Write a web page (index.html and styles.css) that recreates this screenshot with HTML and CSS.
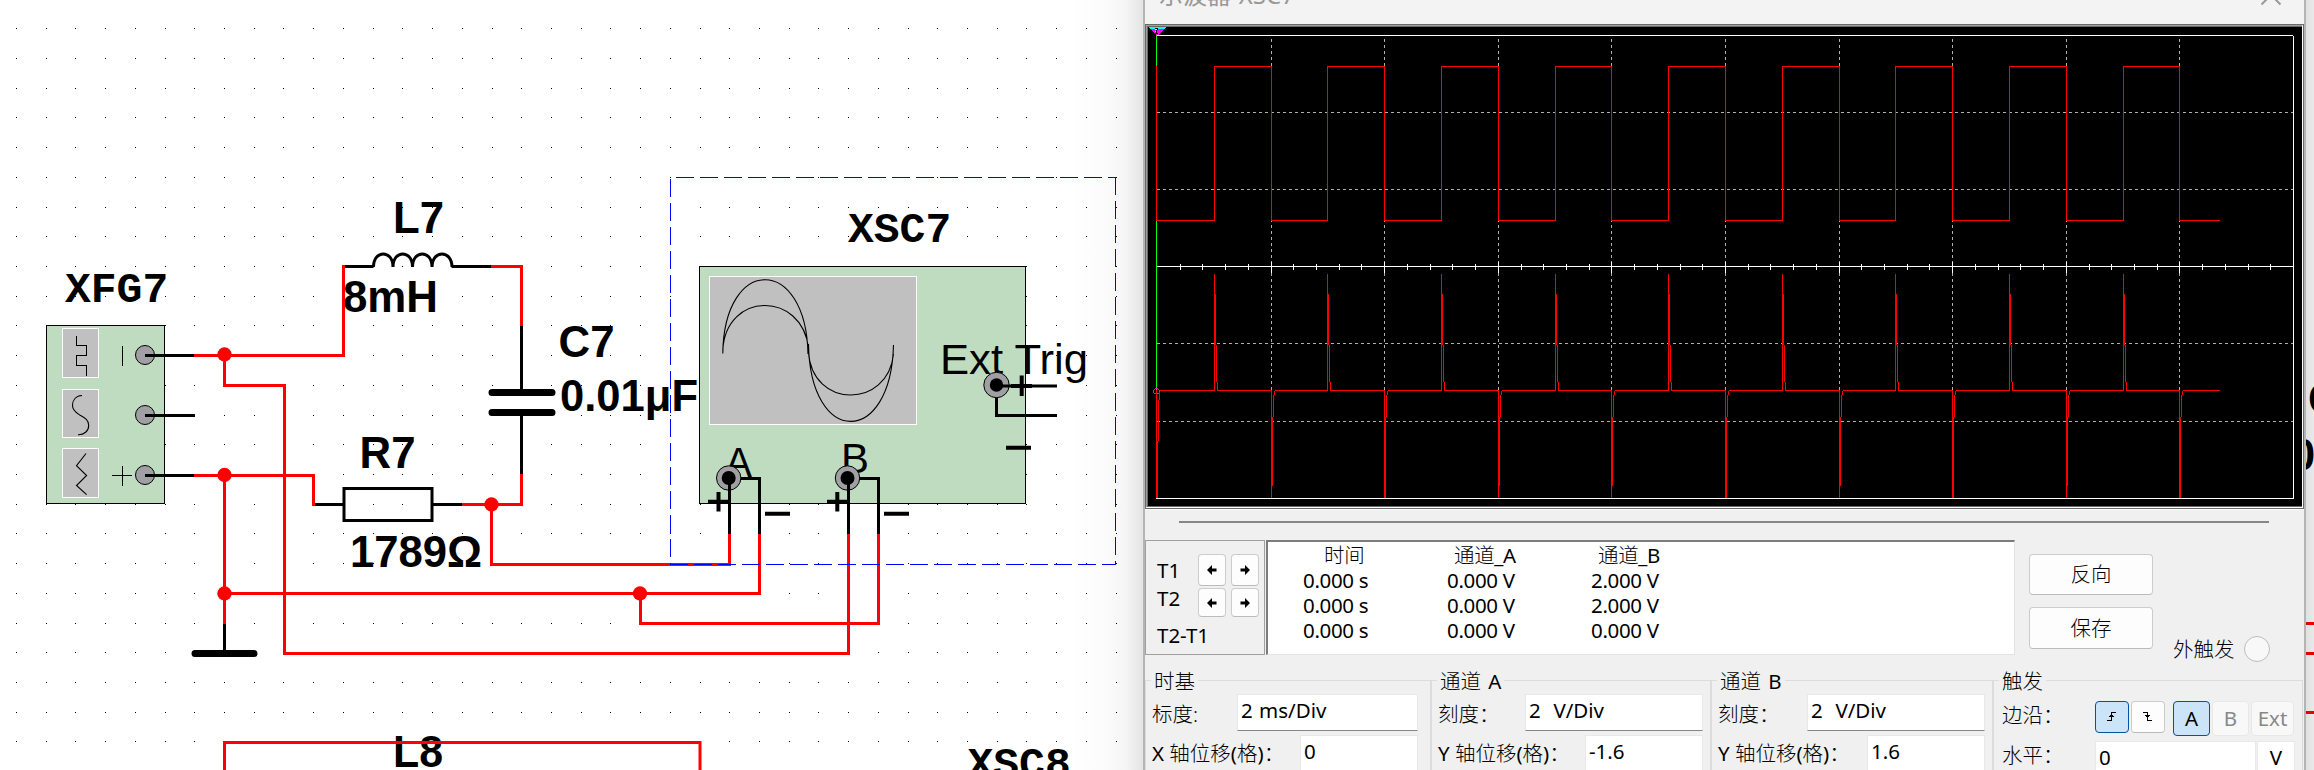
FILE: index.html
```html
<!DOCTYPE html>
<html lang="zh-CN">
<head>
<meta charset="utf-8">
<title>示波器-XSC7</title>
<link rel="stylesheet" href="styles.css">
</head>
<body>
<svg class="schematic" width="2314" height="770" viewBox="0 0 2314 770">
  <g id="grid" shape-rendering="crispEdges"></g>
  <!-- function generator -->
  <g shape-rendering="crispEdges">
    <rect class="device" x="46.500" y="325.500" width="118" height="178"/>
    <rect class="screen" x="62.500" y="328.500" width="36" height="49"/>
    <rect class="screen" x="62.500" y="389.500" width="36" height="48"/>
    <rect class="screen" x="62.500" y="448.500" width="36" height="49"/>
    <path class="thin" d="M76.500 336V345.500H86.500V355.500H76.500V365.500H86.500V376M122.500 346V366M122.500 466V486M112 475.500H132"/>
  </g>
  <path class="thin" d="M82 395.500C75 396 72.500 401 72.500 405.500C72.500 411 77 413 80.500 415.500C85 418 88.700 420 88.700 425.500C88.700 431 84 435 78 434.700M86 453.500L76.500 465.700L86.600 475.500L76.500 485.500L86.600 494.700"/>
  <g class="pin"><circle cx="145" cy="355" r="9.500"/><circle cx="145" cy="415" r="9.500"/><circle cx="145" cy="475" r="9.500"/></g>
  <!-- oscilloscope -->
  <g shape-rendering="crispEdges">
    <rect class="device" x="699.500" y="266.500" width="326" height="237"/>
    <rect class="screen" x="709.500" y="276.500" width="207" height="148"/>
  </g>
  <path class="thin" d="M722.800 353.500C724 255 806 255 808 354M722.800 350C726 291 802 291 808.500 348M808.500 344C810 447 891 447 893.500 345M808.500 352C812 409 888 409 893.500 354"/>

  <g class="label">
    <text x="393" y="232.500" textLength="51" lengthAdjust="spacingAndGlyphs">L7</text>
    <text x="343" y="311.500" textLength="95" lengthAdjust="spacingAndGlyphs">8mH</text>
    <text x="359.500" y="467.500" textLength="56" lengthAdjust="spacingAndGlyphs">R7</text>
    <text x="558.500" y="357" textLength="56" lengthAdjust="spacingAndGlyphs">C7</text>
    <text x="560" y="411" textLength="138" lengthAdjust="spacingAndGlyphs">0.01μF</text>
    <text x="350" y="566.500" textLength="132" lengthAdjust="spacingAndGlyphs">1789Ω</text>
    <text x="393" y="767" textLength="50" lengthAdjust="spacingAndGlyphs">L8</text>
  </g>
  <g class="name">
    <text x="65" y="301.500">XFG7</text>
    <text x="848" y="242">XSC7</text>
    <text x="967.500" y="776.500">XSC8</text>
  </g>
  <g class="port">
    <text x="940" y="373.500" textLength="148" lengthAdjust="spacingAndGlyphs">Ext Trig</text>
    <text x="725" y="477" textLength="27" lengthAdjust="spacingAndGlyphs">A</text>
    <text x="841" y="473" textLength="28" lengthAdjust="spacingAndGlyphs">B</text>
  </g>

  <!-- component leads -->
  <g class="lead">
    <path d="M145 355.500H194M145 415.500H195M145 475.500H194M344 266.500H373.500M451.500 266.500H491M521.500 326V389M521.500 413V474M313 504.500H344M432 504.500H462.500M224.500 624V653"/>
    <path d="M373.500 267C373.500 249.500 393 249.500 393 267C393 249.500 412.500 249.500 412.500 267C412.500 249.500 432 249.500 432 267C432 249.500 452 249.500 452 267"/>
    <rect x="344" y="488.500" width="88" height="32"/>
    <path class="plate" d="M492 392.500H552M492 412.500H552M195 653.500H254"/>
  </g>

  <!-- nets -->
  <path class="wire" d="M194 355.500H343.500V265M491 266.500H521.500V326M521.500 474V504.500H462.500M194 475.500H313.500V506M224.500 355V385.500H284.500V653.500H848.500V534M224.500 475V624M224.500 593.500H759.500V534M640.500 593V623.500H878.500V534M491.500 504V564.500H729.500V534M224.500 771V742.500H700V771"/>
  <g class="node"><circle cx="224.500" cy="354.500" r="7.200"/><circle cx="224.500" cy="475" r="7.200"/><circle cx="491.500" cy="504.500" r="7.200"/><circle cx="224.500" cy="593.500" r="7.200"/><circle cx="640" cy="593.500" r="7.200"/></g>

  <g class="selection" shape-rendering="crispEdges">
    <path d="M676 177.500H1116M1115.500 177V564M670.500 179V564M670 564.500H1116"/>
  </g>

  <!-- probes -->
  <path class="lead" d="M729 478.500H759.500V534M848 478.500H878.500V534M996.500 385V415.500H1057"/>
  <g class="probe"><circle cx="728.700" cy="478" r="12.200"/><circle cx="847.500" cy="478" r="12.200"/><circle cx="996.500" cy="385" r="12.700"/></g>
  <g><circle cx="728.700" cy="478" r="7"/><circle cx="847.500" cy="478" r="7"/><circle cx="996.500" cy="385" r="6.700"/></g>
  <path class="lead" d="M729.500 478V534M848.500 478V534M996 386H1057"/>
  <path class="sign" d="M708 501.700H729M718.500 492V511.500M827 501.700H848M837.300 492V511.500M765 513.700H790M884 513.700H909M1011 386H1032M1021.700 375.500V396M1006 447.700H1031"/>

  <!-- parts beyond the instrument window -->
  <g class="label"><text x="2308" y="414">C8</text><text x="2291" y="470">0.01μF</text></g>
  <path class="wire" d="M2300 623.500H2314M2300 653.500H2314M2300 712.500H2314"/>
</svg>
<div class="shade shade-left"></div>
<div class="shade shade-right"></div>

<main class="window">
  <header class="titlebar">
    <span class="title">示波器-XSC7</span>
    <svg class="close" width="22" height="24" viewBox="0 0 22 24"><path d="M1.500 4.500L11 -5L20.500 4.500"/></svg>
  </header>

  <div class="display">
    <svg width="1154" height="479" viewBox="1148 27 1154 479" shape-rendering="crispEdges">
      <path class="cursor-b" d="M1148 27h18l-9 9z"/><path class="cursor-a" d="M1148 27h18l-2 2h-14z"/>
      <path class="cursor-n" d="M1155 28h3v2h-1v3h1v1h-3v-1h1v-3h-1z"/><path class="cursor-y" d="M1155 29h2v1h-2zM1155 31h1v1h-1z"/>
      <g id="divisions"></g>
      <path class="frame" d="M1156 35.500H2293M2293.500 36V498M1156 498.500H2294M1157 266.500H2294"/>
      <g id="ticks"></g>
      <path class="marker" d="M1156.500 35V390"/>
      <path class="ring" d="M1155 388.500h3M1154 389.500h1M1158 389.500h1M1153.500 390v3M1159.500 390v3M1154 393.500h5"/>
      <path id="traceA" class="trace"/>
      <path id="traceB" class="trace"/>
    </svg>
  </div>

  <div class="scroller"></div>

  <section class="readout">
    <div class="cursors">
      <span>T1</span>
      <button><svg width="10" height="10"><path d="M0 5L5 0V3.500H9.500V6.500H5V10Z"/></svg></button>
      <button><svg width="10" height="10"><path d="M10 5L5 0V3.500H.5V6.500H5V10Z"/></svg></button>
      <span class="t2">T2</span>
      <button><svg width="10" height="10"><path d="M0 5L5 0V3.500H9.500V6.500H5V10Z"/></svg></button>
      <button><svg width="10" height="10"><path d="M10 5L5 0V3.500H.5V6.500H5V10Z"/></svg></button>
      <span class="diff">T2-T1</span>
    </div>
    <div class="values">
      <b class="h1">时间</b><b>通道<s>_A</s></b><b>通道<s>_B</s></b>
      <span>0.000 s</span><span>0.000 V</span><span>2.000 V</span>
      <span>0.000 s</span><span>0.000 V</span><span>2.000 V</span>
      <span>0.000 s</span><span>0.000 V</span><span>0.000 V</span>
    </div>
    <div class="actions">
      <button>反向</button>
      <button class="save">保存</button>
    </div>
    <div class="external"><span>外触发</span><i></i></div>
  </section>

  <section class="settings">
    <div class="group timebase">
      <h2>时基</h2>
      <div class="row"><label>标度:</label><span class="field wide">2 ms/Div</span></div>
      <div class="row second"><label><s>X</s> 轴位移<s>(</s>格<s>)</s><em>：</em></label><span class="field">0</span></div>
    </div>
    <div class="group channel">
      <h2>通道 <s>A</s></h2>
      <div class="row"><label>刻度<em>：</em></label><span class="field wide">2&nbsp; V/Div</span></div>
      <div class="row second"><label><s>Y</s> 轴位移<s>(</s>格<s>)</s><em>：</em></label><span class="field">-1.6</span></div>
    </div>
    <div class="group channel">
      <h2>通道 <s>B</s></h2>
      <div class="row"><label>刻度<em>：</em></label><span class="field wide">2&nbsp; V/Div</span></div>
      <div class="row second"><label><s>Y</s> 轴位移<s>(</s>格<s>)</s><em>：</em></label><span class="field">1.6</span></div>
    </div>
    <div class="group trigger">
      <h2>触发</h2>
      <div class="row edge">
        <label>边沿<em>：</em></label>
        <button class="slope on"><svg width="10" height="10" shape-rendering="crispEdges"><path d="M0 8.500H4.500V.5H9M2 4.500H7M3 3.500H6"/></svg></button>
        <button class="slope"><svg width="10" height="10" shape-rendering="crispEdges"><path d="M0 .5H4.500V8.500H9M2 3.500H7M3 4.500H6"/></svg></button>
        <button class="source a on">A</button>
        <button class="source off">B</button>
        <button class="source ext off">Ext</button>
      </div>
      <div class="row level"><label>水平<em>：</em></label><span class="field number">0</span><span class="field unit">V</span></div>
    </div>
  </section>
</main>
<script src="script.js"></script>
</body>
</html>
```
FILE: styles.css
```css
* { box-sizing: border-box; }
body {
  margin: 0;
  width: 2314px;
  height: 770px;
  overflow: hidden;
  position: relative;
  background: #fff;
  color: #000;
  font: 20.5px/25px "Noto Sans", "Noto Sans CJK SC", sans-serif;
}
svg { display: block; }
s { text-decoration: none; font-weight: 400; }

/* schematic canvas */
.schematic { position: absolute; left: 0; top: 0; }
.device { fill: #c0dcc0; stroke: #000; }
.screen { fill: #c0c0c0; stroke: #fff; }
.thin { fill: none; stroke: #000; stroke-width: 1.1; }
.pin circle { fill: #a0a0a4; stroke: #000; }
.probe circle { fill: #a0a0a4; stroke: #000; }
.lead { fill: none; stroke: #000; stroke-width: 3; }
.lead .plate { stroke-width: 7; stroke-linecap: round; }
.sign { fill: none; stroke: #000; stroke-width: 4; }
.wire { fill: none; stroke: #f00; stroke-width: 3; }
.node circle { fill: #f00; }
.selection { fill: none; stroke: #00f; stroke-dasharray: 18 6; }
.label { font: bold 43.5px "Liberation Sans", sans-serif; }
.name { font: bold 43px "Liberation Mono", monospace; }
.port { font: 42.5px "Liberation Sans", sans-serif; }

.shade { position: absolute; top: 0; height: 770px; }
.shade-left { left: 1070px; width: 74px; background: linear-gradient(90deg, #0000, #00000004 50%, #0000000a 75%, #0000001c); }
.shade-right { left: 2306px; width: 8px; background: linear-gradient(90deg, #0000001e, #00000016); }

/* instrument window */
.window {
  position: absolute;
  left: 1143px;
  top: 0;
  width: 1163px;
  height: 770px;
  overflow: hidden;
  border: solid #b4b4b4;
  border-width: 0 2px;
  background: #f0f0f0;
}
.titlebar {
  display: flex;
  justify-content: space-between;
  height: 24px;
  padding: 0 22px 0 14px;
  overflow: hidden;
  background: #f3f3f3;
}
.title { margin-top: -19px; font-size: 24px; line-height: 28px; color: #999; }
.close { fill: none; stroke: #999; stroke-width: 2; }

.display {
  height: 485px;
  border: 1px solid #696969;
  box-shadow: 0 1px #fff;
  padding: 2px 1px 1px 2px;
  background: linear-gradient(#696969, #696969) 1px 1px / 1155px 481px no-repeat, linear-gradient(#a0a0a0, #a0a0a0) 0 0 / 1156px 482px no-repeat, #fff;
}
.display svg { background: #000; }
.frame { fill: none; stroke: #fff; }
.trace { fill: none; stroke: #f00; }
.marker { fill: none; stroke: #0f0; }
.ring { fill: none; stroke: #f0f; }
.cursor-a { fill: #0ff; }
.cursor-b { fill: #f0f; }
.cursor-n { fill: #000; }
.cursor-y { fill: #ff0; }
.div { stroke: #b0b0b0; stroke-dasharray: 3 3; }

.scroller { height: 2px; margin: 12px 35px 17px 34px; background: #868686; }

button {
  display: flex;
  align-items: center;
  justify-content: center;
  margin: 0;
  padding: 0;
  border: 1px solid #ccc;
  border-bottom-color: #bbb;
  border-radius: 4px;
  background: #fdfdfd;
  color: #000;
  font: inherit;
}
.readout { display: flex; height: 115px; }
.cursors {
  display: grid;
  grid-template: 32px 29px 32px / 36px 28px 28px;
  column-gap: 5px;
  row-gap: 2px;
  align-items: center;
  width: 120px;
  padding: 13px 0 0 11px;
  margin-right: 1px;
  border: 1px solid #a0a0a0;
}
.cursors button { height: 100%; }
.t2 { margin-top: -9px; }
.diff { grid-column: 1 / -1; }
.values {
  display: grid;
  grid-template: repeat(4, 25px) / repeat(3, 144px);
  width: 749px;
  padding: 1px 0 0 35px;
  border: 1px solid #e3e3e3;
  border-top: 2px solid #7c7c7c;
  border-left: 2px solid #7c7c7c;
  background: #fff;
  letter-spacing: -.35px;
}
.values b { font-weight: 300; padding-left: 7px; }
.values .h1 { padding-left: 21px; }
.actions { padding: 14px 0 0 14px; }
.actions button { width: 124px; height: 41px; font-weight: 300; }
.actions .save { margin-top: 12px; height: 42px; }
.external { display: flex; align-items: center; gap: 9px; height: 26px; margin: 96px 0 0 20px; font-weight: 300; }
.external i { width: 26px; height: 26px; border: 1.5px solid #bdbdbd; border-radius: 50%; background: #f8f8f8; }

.settings { display: grid; grid-template-columns: 286px 280px 282px 310px; margin-top: 25px; height: 90px; }
.group { position: relative; height: 120px; border: 1px solid #dcdcdc; padding: 13px 0 0 6px; font-weight: 300; }
h2 { position: absolute; left: 5px; top: -12px; margin: 0; padding: 0 3px; background: #f0f0f0; font-size: 20.5px; font-weight: 300; word-spacing: 2px; }
em { display: inline-block; width: 10px; font-style: normal; }
.row { display: flex; justify-content: space-between; width: 266px; height: 37px; }
.row label { padding-top: 8px; font-weight: 300; white-space: nowrap; }
.field {
  width: 118px;
  height: 37px;
  padding: 3px 3px;
  border: 1px solid #e8e8e8;
  border-bottom-color: #868686;
  background: #fff;
  font-weight: 400;
}
.field.wide { width: 181px; word-spacing: 1px; }
.second { margin-top: 4px; }
.second label { padding-top: 6px; }
.channel .row { width: 265px; }
.channel .field.wide { width: 178px; }
.channel + .channel .row { width: 267px; }
.trigger { padding: 20px 0 0 8px; }
.trigger .row { justify-content: flex-start; width: auto; height: 36px; }
.trigger label { width: 93px; padding-top: 2px; }
.slope { width: 34px; height: 32px; margin-right: 2px; }
.slope path { fill: none; stroke: #000; }
.source { width: 37px; height: 35px; margin-right: 2px; font-weight: 400; }
.source.a { margin-left: 6px; }
.source.ext { width: 43px; }
button.on { border-color: #0054a0; background: #cce4f7; }
button.off { border-color: #e8e8e8; background: #f8f8f8; color: #888; }
.trigger .level { margin-top: 4px; }
.number { width: 161px; margin-right: 1px; }
.unit { width: 38px; text-align: center; }
```
FILE: script.js
```js
const line = (x1, y1, x2, y2, cls) =>
  `<line class="${cls}" x1="${x1}" y1="${y1}" x2="${x2}" y2="${y2}"/>`;

// Placement grid of the schematic
const pitch = 29.72;
let dots = '';
for (let c = 0; c < 78; c++) {
  for (let r = 0; r < 25; r++) {
    dots += `<rect x="${Math.round(16 + c * pitch)}" y="${Math.round(28.2 + r * pitch)}" width="1" height="1"/>`;
  }
}
document.getElementById('grid').innerHTML = dots;

// Scope divisions
const left = 1157, div = 113.6;
const at = k => Math.round(left + k * div) + 0.5;
let grid = '';
for (let k = 1; k < 10; k++) grid += line(at(k), 39, at(k), 498, 'div');
for (const y of [112.5, 189.5, 343.5, 421.5]) grid += line(1157, y, 2293, y, 'div');
document.getElementById('divisions').innerHTML = grid;

let ticks = '';
for (let i = 1; i < 50; i++) {
  const major = i % 5 === 0;
  ticks += line(at(i / 5), major ? 262 : 264, at(i / 5), major ? 273 : 270, 'frame');
}
document.getElementById('ticks').innerHTML = ticks;

// Square wave on one channel, differentiated pulses on the other
const full = [1, 4, 6, 8];
let a = 'M1156.5 66V220.5';
let b = 'M1156.5 390V498M1157.5 498V441M1158.5 441V400M1159.5 400V391.500M1160 390.500';
for (let k = 0; k < 9; k++) {
  const up = at(k + 0.5), down = at(k + 1);
  const low = full.includes(k) ? 498 : 486;
  a += `H${up}V66.500H${down}V220.500`;
  b += `H${up}M${up} 391V274M${up + 1} 294V345M${up + 2} 345V382M${up + 3} 382V391M${up + 3} 390.500`;
  b += `H${down}M${down} 390V498M${down + 1} ${low}V417M${down + 2} 417V395M${down + 3} 395V391M${down + 3} 390.500`;
}
document.getElementById('traceA').setAttribute('d', a + 'H2220');
document.getElementById('traceB').setAttribute('d', b + 'H2220');
```
